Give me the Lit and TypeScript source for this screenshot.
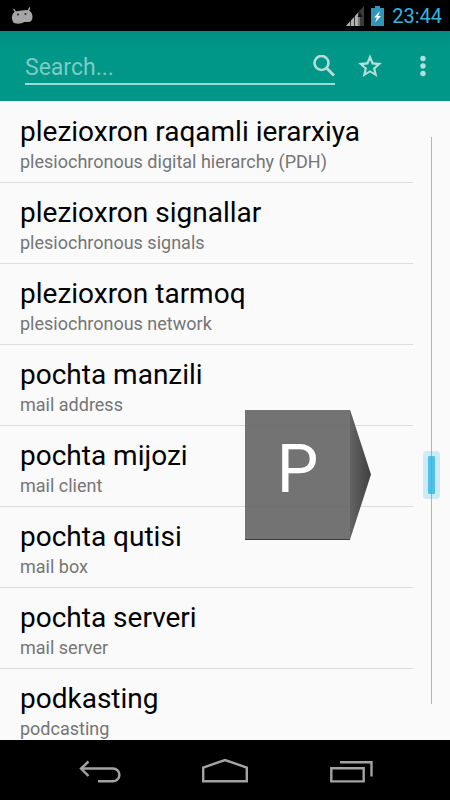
import { LitElement, html, css, svg } from "lit";
import { customElement, property, state } from "lit/decorators.js";

interface Entry {
  term: string;
  meaning: string;
}

const ENTRIES: Entry[] = [
  { term: "plezioxron raqamli ierarxiya", meaning: "plesiochronous digital hierarchy (PDH)" },
  { term: "plezioxron signallar", meaning: "plesiochronous signals" },
  { term: "plezioxron tarmoq", meaning: "plesiochronous network" },
  { term: "pochta manzili", meaning: "mail address" },
  { term: "pochta mijozi", meaning: "mail client" },
  { term: "pochta qutisi", meaning: "mail box" },
  { term: "pochta serveri", meaning: "mail server" },
  { term: "podkasting", meaning: "podcasting" },
];

@customElement("status-bar")
export class StatusBar extends LitElement {
  static styles = css`
    :host {
      display: flex;
      align-items: center;
      height: 31px;
      padding: 0 8px 0 10px;
      background: #000;
      color: #33b5e5;
      font-size: 20px;
    }
    .spacer {
      flex: 1;
    }
    .signal {
      margin-right: 7px;
    }
    .battery {
      margin-right: 8px;
    }
    svg {
      display: block;
    }
  `;
  render() {
    return html`
      <svg width="24" height="18" viewBox="0 0 24 18" aria-hidden="true">
        <path d="M4 2.500 6 6M19.500 1 18 5" stroke="#a6a6a6" stroke-width="1.500" stroke-linecap="round" />
        <path
          d="M2 12C1.500 7 4 4.200 8 4L16 3C20.500 3 22.500 6 22.500 10C22.500 13 21 15 18 15L14 15C12 17 4.500 17.500 3 15Z"
          fill="#a6a6a6"
        />
        <circle cx="8" cy="7.500" r="1" fill="#222" />
        <circle cx="15.500" cy="7" r="1" fill="#222" />
      </svg>
      <span class="spacer"></span>
      <svg class="signal" width="18" height="20" viewBox="0 0 18 20" aria-hidden="true">
        <path d="M18 0V20H0Z" fill="#3c3c3c" />
        <path d="M4 15.600V20H0ZM5 14.500 8 11.200V20H5ZM9 10 12 6.800V20H9Z" fill="#b0b0b0" />
        <path d="M13 9V20" stroke="#8a8a8a" stroke-width="1.500" />
        <path d="M14 6 11.500 11H16.500Z" fill="#111" />
      </svg>
      <svg class="battery" width="13" height="20" viewBox="0 0 13 20" aria-hidden="true">
        <path d="M4 0H9V2H13V20H0V2H4Z" fill="#3295b8" />
        <path d="M9 5 3 11.500H6L4 16.500 10 10H7Z" fill="#fff" />
      </svg>
      <time>23:44</time>
    `;
  }
}

@customElement("search-toolbar")
export class SearchToolbar extends LitElement {
  static styles = css`
    :host {
      display: grid;
      grid-template-columns: 1fr 70px 35px;
      align-items: center;
      height: 70px;
      padding: 0 10px 0 25px;
      box-sizing: border-box;
      background: linear-gradient(#009081, #009688 16px);
    }
    .field {
      display: flex;
      align-items: center;
      min-width: 0;
      height: 32px;
      padding-top: 4px;
      border-bottom: 2px solid #a0d8d2;
    }
    input {
      flex: 1;
      min-width: 0;
      padding: 0;
      border: 0;
      outline: 0;
      background: none;
      color: #fff;
      font: 23px Roboto, sans-serif;
    }
    input::placeholder {
      color: #7fcac3;
      opacity: 1;
    }
    button {
      display: flex;
      justify-content: center;
      margin: 0;
      padding: 0;
      border: 0;
      background: none;
      color: #b2dfdb;
    }
    svg {
      display: block;
    }
  `;
  render() {
    return html`
      <div class="field">
        <input type="text" placeholder="Search..." aria-label="Search" />
        <button aria-label="Search">
          <svg width="22" height="24" viewBox="0 0 22 24" fill="none" stroke="currentColor">
            <circle cx="8.500" cy="8" r="7" stroke-width="2.600" />
            <path d="M13.500 13 21 20.500" stroke-width="3" />
          </svg>
        </button>
      </div>
      <button aria-label="Favourites">
        <svg width="26" height="26" viewBox="0 0 24 24" fill="currentColor">
          <path
            d="M23 9.240 15.100 8.600 12 1.200 8.900 8.600 1 9.240 7 14.430 5.200 22.200 12 18.100 18.800 22.200 17 14.430ZM12 15.900 8.240 18.200 9.240 13.900 5.900 11 10.300 10.600 12 6.600 13.700 10.600 18.100 11 14.770 13.900 15.770 18.200Z"
          />
        </svg>
      </button>
      <button aria-label="More options">
        <svg width="20" height="24" viewBox="0 0 20 24" fill="currentColor">
          <circle cx="10" cy="4.500" r="2.700" />
          <circle cx="10" cy="12" r="2.700" />
          <circle cx="10" cy="19.500" r="2.700" />
        </svg>
      </button>
    `;
  }
}

@customElement("word-list")
export class WordList extends LitElement {
  @property({ attribute: false }) entries: Entry[] = [];

  static styles = css`
    :host {
      display: block;
      overflow: hidden;
    }
    ul {
      margin: 0;
      padding: 1px 0 0;
      list-style: none;
    }
    a {
      display: block;
      padding: 14px 20px 7px;
      border-bottom: 1px solid #dcdcdc;
      color: #000;
      text-decoration: none;
    }
    .term {
      font-size: 28px;
      line-height: 32px;
      white-space: nowrap;
    }
    .meaning {
      color: #757575;
      font-size: 18px;
      line-height: 27px;
      white-space: nowrap;
    }
  `;
  render() {
    return html`<ul>
      ${this.entries.map(
        (e) => html`<li>
          <a href="#">
            <div class="term">${e.term}</div>
            <div class="meaning">${e.meaning}</div>
          </a>
        </li>`
      )}
    </ul>`;
  }
}

@customElement("nav-bar")
export class NavBar extends LitElement {
  static styles = css`
    :host {
      display: flex;
      align-items: center;
      justify-content: center;
      gap: 77px;
      height: 60px;
      background: #000;
    }
    button {
      padding: 0;
      border: 0;
      background: none;
      color: #a3a3a3;
    }
    svg {
      display: block;
    }
  `;
  private icon(label: string, shape: unknown) {
    return html`<button aria-label=${label}>
      <svg width="48" height="32" viewBox="0 0 48 32" fill="none" stroke="currentColor" stroke-width="2.400">${shape}</svg>
    </button>`;
  }
  render() {
    return html`
      ${this.icon("Back", svg`<path d="M5 14.500H37A6.400 6.400 0 0 1 37 27.300H22" /><path d="M12.500 7.500 5 14.500 12.500 22" />`)}
      ${this.icon("Home", svg`<path d="M2.200 27.300V13.500L24 6 45.800 13.500V27.300Z" />`)}
      ${this.icon("Recent apps", svg`<path d="M5.300 14.300H37.700V27.400H5.300Z" /><path d="M14 8.300H45.500V22.500" />`)}
    `;
  }
}

@customElement("app-root")
export class AppRoot extends LitElement {
  @state() private position = 603;

  static styles = css`
    :host {
      display: flex;
      flex-direction: column;
      height: 100vh;
      background: #fafafa;
      font-family: Roboto, sans-serif;
    }
    main {
      position: relative;
      flex: 1;
      min-height: 0;
      display: flex;
    }
    word-list {
      flex: 1;
      min-width: 0;
    }
    .scroller {
      writing-mode: vertical-lr;
      appearance: none;
      width: 17px;
      margin: 36px 10px;
      background: linear-gradient(#b4b4b4, #b4b4b4) center / 1px 100% no-repeat;
    }
    .scroller::-webkit-slider-thumb {
      appearance: none;
      width: 7px;
      height: 38px;
      border-radius: 1px;
      background: rgba(51, 181, 229, 0.85);
      box-shadow: 0 0 0 5px rgba(51, 181, 229, 0.22);
    }
    .bubble {
      position: absolute;
      top: calc(58% - 62px);
      right: 79px;
      display: flex;
      pointer-events: none;
    }
    .letter {
      width: 105px;
      height: 130px;
      box-sizing: border-box;
      border-bottom: 1px solid #3c3c3c;
      background: rgba(100, 100, 100, 0.9);
      color: #fff;
      font-size: 66px;
      line-height: 120px;
      text-align: center;
    }
    .tip {
      width: 21px;
      background: linear-gradient(90deg, #636363, #404040);
      clip-path: polygon(0 0, 100% 50%, 0 100%);
    }
  `;

  render() {
    return html`
      <status-bar></status-bar>
      <search-toolbar></search-toolbar>
      <main>
        <word-list .entries=${ENTRIES}></word-list>
        <input class="scroller" type="range" min="0" max="1000" .value=${String(this.position)} aria-label="Fast scroll" />
        <div class="bubble">
          <div class="letter">P</div>
          <div class="tip"></div>
        </div>
      </main>
      <nav-bar></nav-bar>
    `;
  }
}
